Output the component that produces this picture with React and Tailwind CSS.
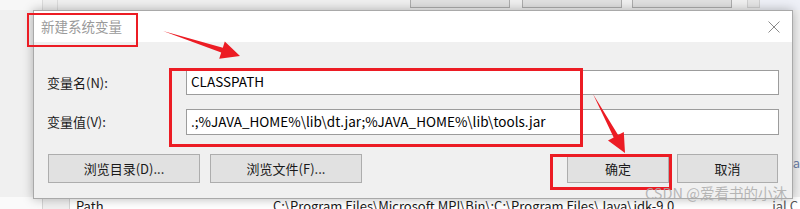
import React from 'react';

const RED = '#ec1c24';

// gray push button used both in the dialog and in the window behind it
const WinButton = ({ children, className = '' }) => (
  <button className={`h-[29px] border border-[#adadad] bg-[#e1e1e1] text-[13px] text-[#1a1a1a] ${className}`}>
    {children}
  </button>
);

const Field = ({ label, value, className = '' }) => (
  <div className={`flex items-center ${className}`}>
    <label className="w-[139px] shrink-0 text-[13px] text-[#1a1a1a]">{label}</label>
    <div className="flex h-full flex-1 items-center border border-[#9c9c9c] bg-white pl-[4px] pb-[2px] text-[13.5px] text-black">
      {value}
    </div>
  </div>
);

const App = () => {
  return (
    <div className="relative h-[209px] w-[800px] overflow-hidden bg-[#f0f0f0] font-['Noto_Sans_CJK_SC','Noto_Sans',sans-serif]">
      {/* window behind the dialog */}
      <div className="flex h-full flex-col">
        <div className="flex h-[10px]">
          <div className="w-[42px] bg-[#f7f7f7]" />
          <div className="w-[15px] border-l border-[#dcdcdc] bg-[#f0f0f0]" />
          <div className="flex flex-1 border-l border-[#dcdcdc] pl-[352px]">
            <div className="mt-[-10px] h-[18px] w-[100px] border border-[#adadad] bg-[#e1e1e1]" />
            <div className="mt-[-10px] ml-[12px] h-[18px] w-[100px] border border-[#adadad] bg-[#e1e1e1]" />
            <div className="mt-[-10px] ml-[10px] h-[18px] w-[100px] border border-[#adadad] bg-[#e1e1e1]" />
            <div className="mt-[-10px] ml-[15px] h-[18px] w-[13px] border border-[#d0d0d0] bg-[#e6e6e6]" />
            <div className="flex-1 bg-[#eef0f7]" />
          </div>
        </div>
        <div className="flex flex-1 justify-end pt-[146px] pr-[0px]">
          <span className="text-[13px] leading-none text-[#6b7fa8]">a</span>
        </div>
        <div className="flex h-[12px] text-[13px] leading-[18px] text-[#1a1a1a]">
          <div className="w-[42px] bg-[#fafafa]" />
          <div className="w-[28px] border-l border-r border-[#d4d4d4] bg-[#f0f0f0]" />
          <div className="flex flex-1 bg-white pl-[6px]">
            <span className="w-[197px]">Path</span>
            <span>C:\Program Files\Microsoft MPI\Bin\;C:\Program Files\Java\jdk-9.0....</span>
            <span className="ml-auto mr-[2px] text-[#555]">ial C</span>
          </div>
        </div>
      </div>

      {/* dialog */}
      <div className="absolute left-[33px] top-[10px] flex w-[760px] flex-col border border-[#a9a9a9] bg-[#f0f0f0] shadow-[0_0_10px_rgba(0,0,0,0.28)]">
        <div className="flex h-[31px] items-center bg-white pl-[7px] pr-[12px]">
          <span className="text-[13.5px] text-[#9a9a9a]">新建系统变量</span>
          <svg className="ml-auto" width="12" height="12" viewBox="0 0 12 12">
            <path d="M0.5 0.5L11.5 11.5M11.5 0.5L0.5 11.5" stroke="#8a8a8a" strokeWidth="1" fill="none" />
          </svg>
        </div>
        <div className="flex flex-col px-[13px] pt-[28px] pb-[15px]">
          <Field label="变量名(N):" value="CLASSPATH" className="h-[25px]" />
          <Field
            label="变量值(V):"
            value=".;%JAVA_HOME%\lib\dt.jar;%JAVA_HOME%\lib\tools.jar"
            className="mt-[14px] h-[26px]"
          />
          <div className="mt-[19px] flex">
            <div className="ml-[1px] flex gap-[10px]">
              <WinButton className="w-[152px]">浏览目录(D)...</WinButton>
              <WinButton className="w-[152px]">浏览文件(F)...</WinButton>
            </div>
            <div className="ml-auto mr-[1px] flex gap-[8px]">
              <WinButton className="w-[102px]">确定</WinButton>
              <WinButton className="w-[101px]">取消</WinButton>
            </div>
          </div>
        </div>
      </div>

      {/* annotations */}
      <div className="absolute left-[27px] top-[13px] h-[34px] w-[111px] border-2 border-[#ec1c24]" />
      <div className="absolute left-[169px] top-[68px] h-[79px] w-[414px] border-[3px] border-[#ec1c24]" />
      <div className="absolute left-[550px] top-[154px] h-[36px] w-[122px] border-[3px] border-[#ec1c24]" />
      <svg className="pointer-events-none absolute left-0 top-0" width="800" height="209" viewBox="0 0 800 209">
        <polygon
          points="163,31 222.8,47.8 224.8,41.6 240,56 219.2,58.8 221.2,52.6"
          fill={RED}
        />
        <polygon
          points="593,94 618.1,135.1 623.8,132 625,153 608,140.6 613.7,137.5"
          fill={RED}
        />
      </svg>

      <div className="absolute left-[645px] top-[183px] text-[14.5px] leading-[20px] text-[#ababab]/85">
        CSDN @爱看书的小沐
      </div>
    </div>
  );
};

export default App;
